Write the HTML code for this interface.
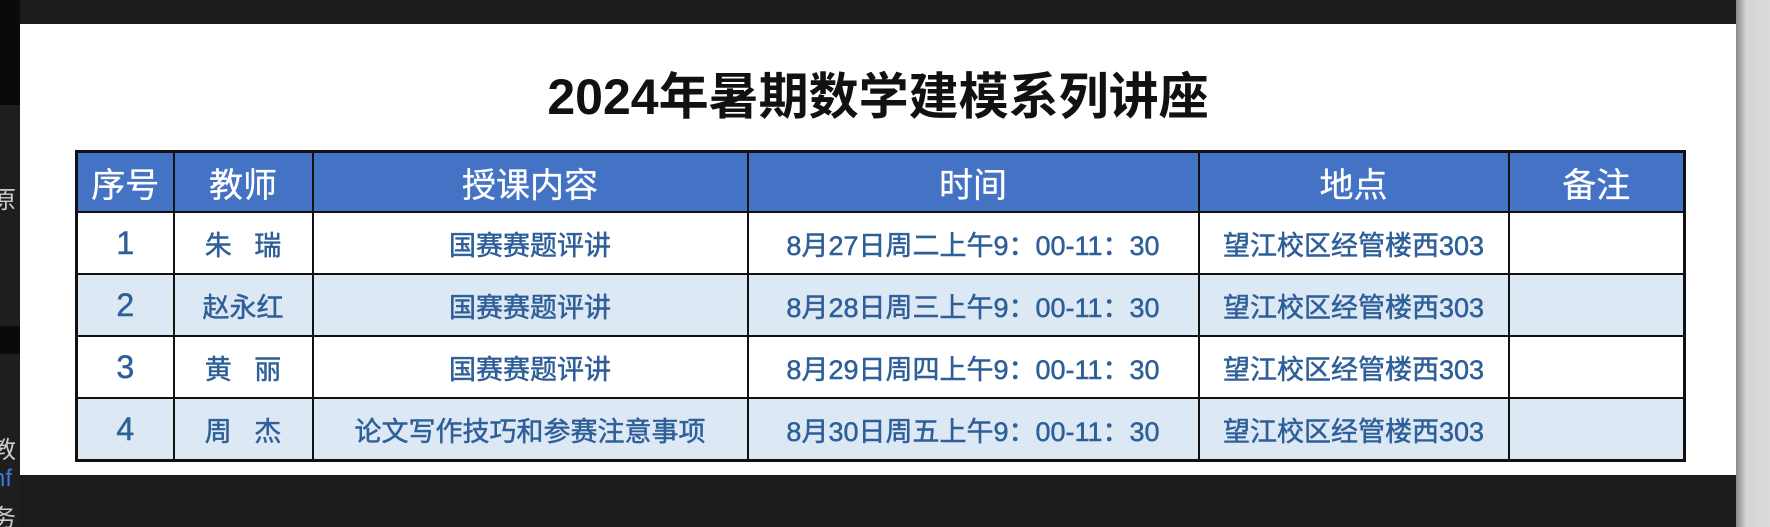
<!DOCTYPE html>
<html><head><meta charset="utf-8"><style>
html,body{margin:0;padding:0;width:1770px;height:527px;overflow:hidden;background:#1c1c1c;position:relative;font-family:"Liberation Sans","Noto Sans CJK SC",sans-serif}
.strip{position:absolute;left:0;top:0;width:20px;height:527px;background:#1e1e1e;overflow:hidden}
.strip div{position:absolute;left:0;width:20px;background:#0a0a0a}
.strip span{position:absolute;left:-8px;font-size:24px;color:#ccc}
.right{position:absolute;left:1736px;top:0;width:34px;height:527px;background:linear-gradient(90deg,#8a8a8a,#d4d4d6 30%,#dcdcde)}
.page{position:absolute;left:20px;top:24px;width:1716px;height:451px;background:#fff}
h1{position:absolute;left:0;width:100%;top:33px;margin:0;text-align:center;font-size:50px;font-weight:bold;color:#111}
table{position:absolute;left:55px;top:126px;border-collapse:collapse;border:3px solid #111;table-layout:fixed}
td{border:2px solid #111;text-align:center;color:#2e5f99;font-size:27px;padding:0;font-weight:normal;-webkit-text-stroke:0.5px #2e5f99;white-space:nowrap;overflow:hidden}
tr.h td{background:#4472c4;color:#fff;font-size:34px;height:58px;-webkit-text-stroke:0.3px #fff}
tr.r td{height:60px}
tr.a td{background:#dde8f5}
td.n{font-size:32px}
</style></head><body>
<div class="strip"><div style="top:0;height:105px"></div><div style="top:326px;height:28px"></div>
<span style="top:180px">原</span><span style="top:430px">教</span><span style="top:465px;color:#3b7bd8">nf</span><span style="top:498px">务</span></div>
<div class="page">
<h1>2024年暑期数学建模系列讲座</h1>
<table>
<colgroup><col style="width:97px"><col style="width:139px"><col style="width:435px"><col style="width:451px"><col style="width:310px"><col style="width:176px"></colgroup>
<tr class="h"><td>序号</td><td>教师</td><td>授课内容</td><td>时间</td><td>地点</td><td>备注</td></tr>
<tr class="r"><td class="n">1</td><td>朱&nbsp;&nbsp;&nbsp;瑞</td><td>国赛赛题评讲</td><td>8月27日周二上午9：00-11：30</td><td>望江校区经管楼西303</td><td></td></tr>
<tr class="r a"><td class="n">2</td><td>赵永红</td><td>国赛赛题评讲</td><td>8月28日周三上午9：00-11：30</td><td>望江校区经管楼西303</td><td></td></tr>
<tr class="r"><td class="n">3</td><td>黄&nbsp;&nbsp;&nbsp;丽</td><td>国赛赛题评讲</td><td>8月29日周四上午9：00-11：30</td><td>望江校区经管楼西303</td><td></td></tr>
<tr class="r a"><td class="n">4</td><td>周&nbsp;&nbsp;&nbsp;杰</td><td>论文写作技巧和参赛注意事项</td><td>8月30日周五上午9：00-11：30</td><td>望江校区经管楼西303</td><td></td></tr>
</table>
</div>
<div class="right"></div>
</body></html>
